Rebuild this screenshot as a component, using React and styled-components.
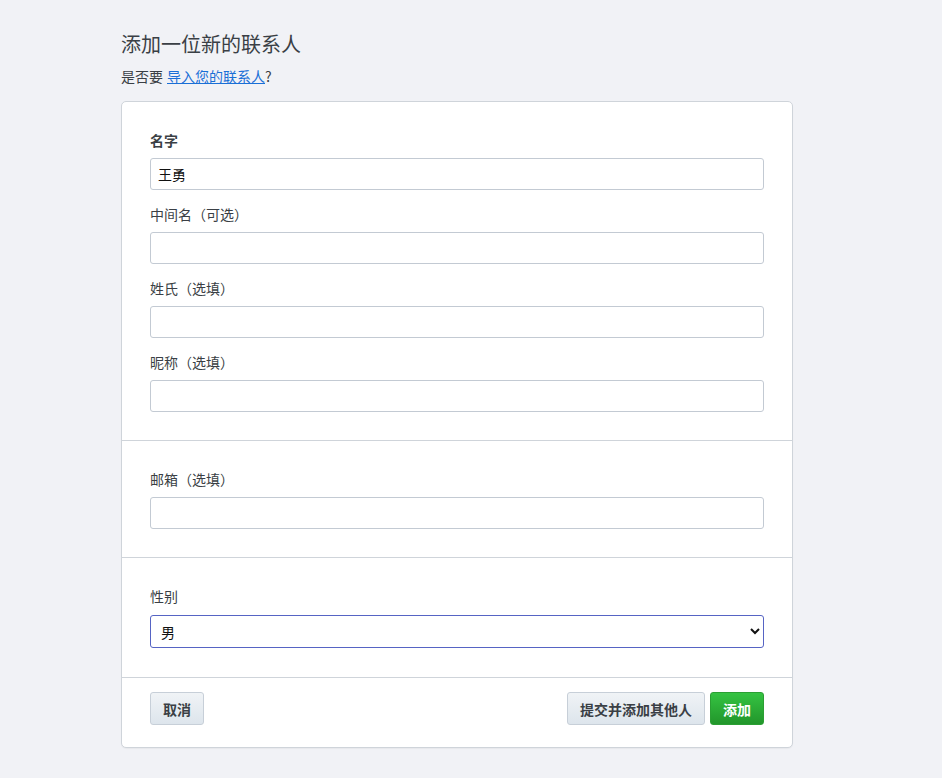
import React from "react";
import styled, { createGlobalStyle } from "styled-components";

const Global = createGlobalStyle`
  body {
    margin: 0;
    background: #f1f2f6;
    font-family: "Noto Sans CJK SC", "Noto Sans", sans-serif;
    color: #333a40;
  }
`;

const Page = styled.div`
  width: 672px;
  margin: 0 auto;
  padding: 28px 0 31px;
  position: relative;
  left: -14px;
`;

const Title = styled.h1`
  margin: 0;
  font-size: 20px;
  font-weight: 400;
  line-height: 32px;
  color: #3a3f45;
`;

const Sub = styled.p`
  margin: 6px 0 15px;
  font-size: 14px;
  line-height: 20px;
  color: #3a3f45;

  a {
    color: #1a6fd6;
    text-decoration: underline;
    margin-left: 4px;
  }
`;

const Card = styled.div`
  background: #fff;
  border: 1px solid #cfd4da;
  border-radius: 5px;
  box-shadow: 0 1px 1px rgba(0, 0, 0, 0.04);
`;

const Section = styled.div`
  padding: 29px 28px 28px;
  border-top: ${(p) => (p.first ? "none" : "1px solid #cfd4da")};
  display: flex;
  flex-direction: column;
  gap: 15px;
`;

const Field = styled.div`
  display: flex;
  flex-direction: column;
`;

const Label = styled.label`
  font-size: 14px;
  line-height: 18px;
  margin-bottom: 9px;
  font-weight: ${(p) => (p.bold ? 700 : 400)};
  color: #3a3f45;
`;

const Input = styled.input`
  height: 32px;
  box-sizing: border-box;
  border: 1px solid #c3cad3;
  border-radius: 3px;
  padding: 0 7px;
  font-size: 14px;
  font-family: inherit;
  color: #111;
  outline: none;
`;

const Select = styled.select`
  height: 33px;
  margin: 1px 0;
  box-sizing: border-box;
  border: 1px solid #5664c4;
  border-radius: 3px;
  padding: 0 6px;
  font-size: 14px;
  font-family: inherit;
  color: #111;
  background: #fff;
  outline: none;
`;

const Footer = styled.div`
  border-top: 1px solid #cfd4da;
  padding: 14px 28px 22px;
  display: flex;
  align-items: center;
  gap: 5px;
`;

const Spacer = styled.div`
  flex: 1;
`;

const Button = styled.button`
  height: 33px;
  padding: 0 12px;
  border-radius: 3px;
  font-family: inherit;
  font-size: 14px;
  font-weight: 700;
  cursor: pointer;
  border: 1px solid ${(p) => (p.primary ? "#2b9f33" : "#c7cfd8")};
  color: ${(p) => (p.primary ? "#fff" : "#3a3f45")};
  background: ${(p) =>
    p.primary
      ? "linear-gradient(#35c342, #22962b)"
      : "linear-gradient(#f0f3f6, #dde5ec)"};
`;

export default function App() {
  return (
    <>
      <Global />
      <Page>
        <Title>添加一位新的联系人</Title>
        <Sub>
          是否要<a href="#">导入您的联系人</a>?
        </Sub>
        <Card>
          <Section first>
            <Field>
              <Label bold>名字</Label>
              <Input defaultValue="王勇" />
            </Field>
            <Field>
              <Label>中间名（可选）</Label>
              <Input />
            </Field>
            <Field>
              <Label>姓氏（选填）</Label>
              <Input />
            </Field>
            <Field>
              <Label>昵称（选填）</Label>
              <Input />
            </Field>
          </Section>
          <Section>
            <Field>
              <Label>邮箱（选填）</Label>
              <Input />
            </Field>
          </Section>
          <Section>
            <Field>
              <Label>性别</Label>
              <Select defaultValue="男">
                <option>男</option>
                <option>女</option>
              </Select>
            </Field>
          </Section>
          <Footer>
            <Button>取消</Button>
            <Spacer />
            <Button>提交并添加其他人</Button>
            <Button primary>添加</Button>
          </Footer>
        </Card>
      </Page>
    </>
  );
}
